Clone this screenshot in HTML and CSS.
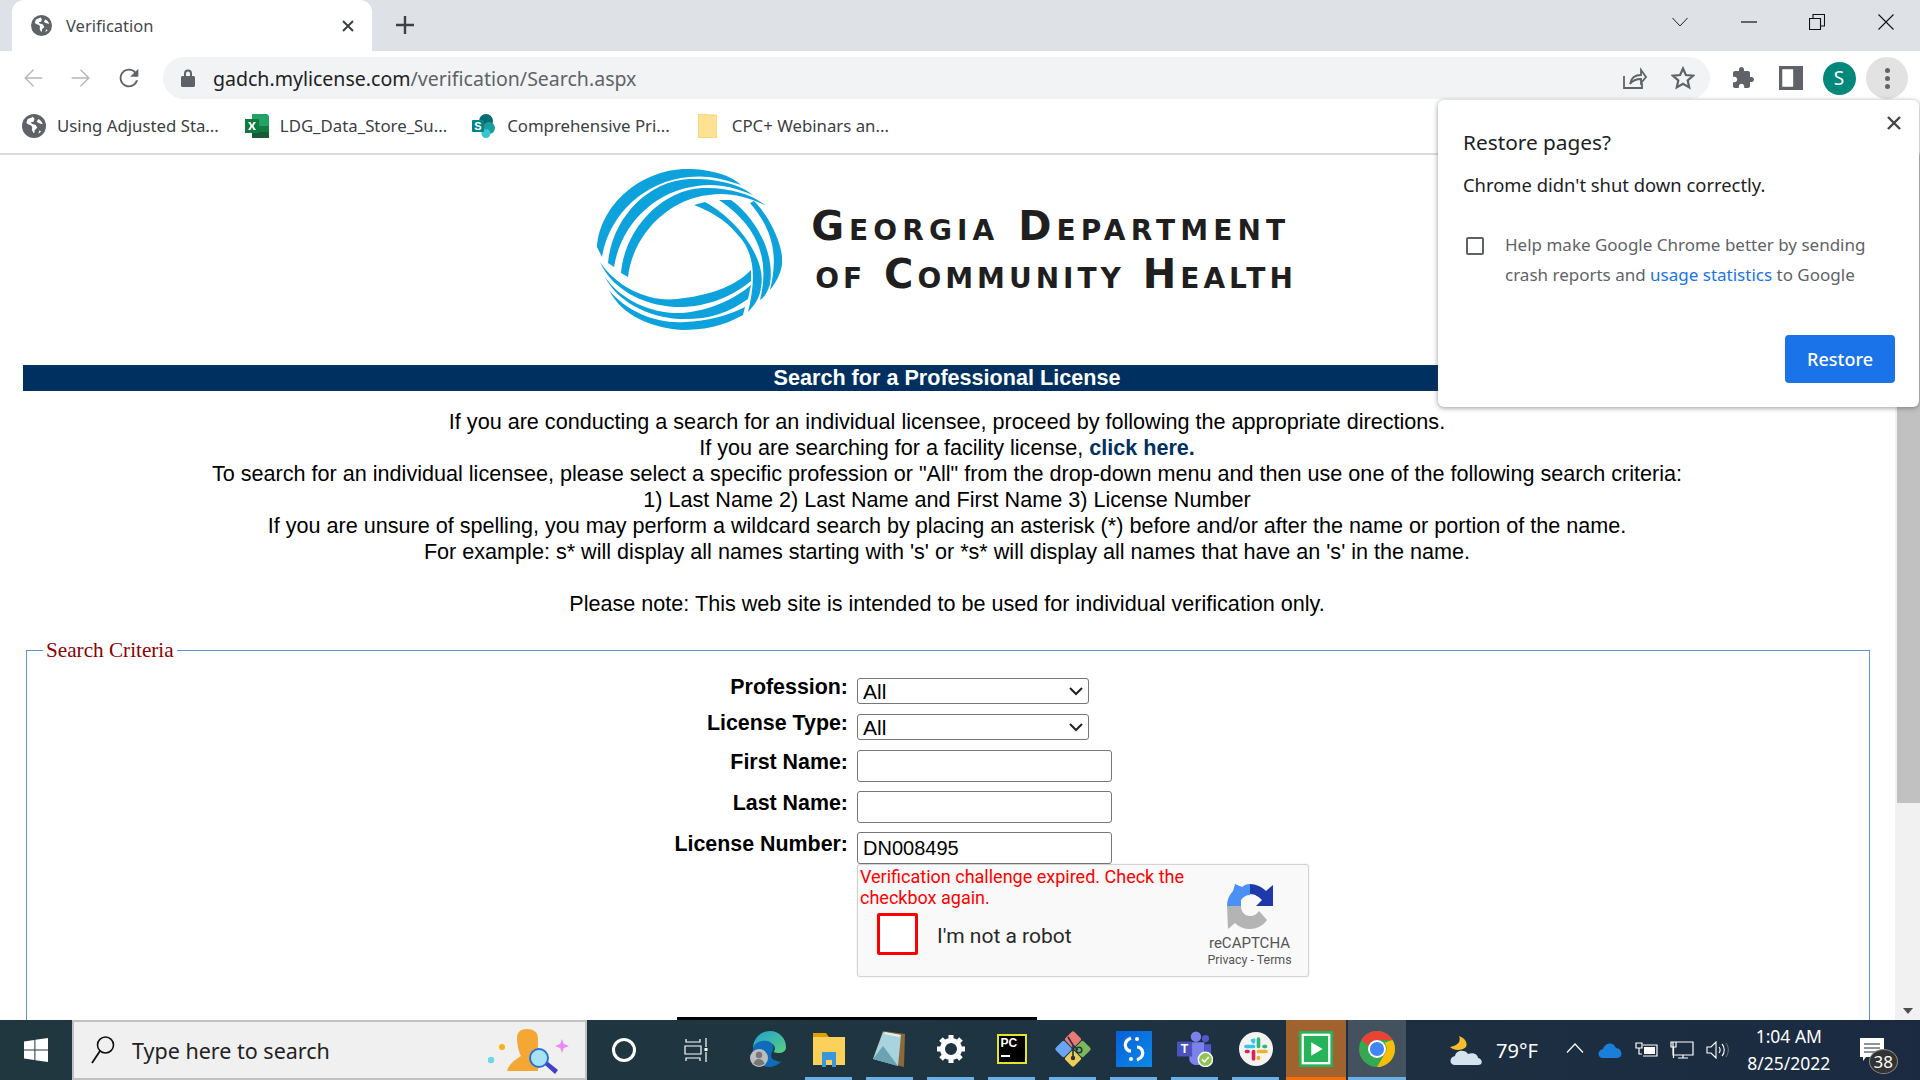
FILE: index.html
```html
<!DOCTYPE html>
<html lang="en">
<head>
    <meta charset="UTF-8">
    <meta name="viewport" content="width=device-width, initial-scale=1.0">
    <title>Verification</title>
    <link rel="stylesheet" href="styles.css">
</head>
<body>
    <svg class="defs" width="0" height="0">
        <symbol id="globe" viewBox="0 0 22 22">
            <circle cx="11" cy="11" r="11" fill="#5f6368"/>
            <path d="M10 2.5c-1 1-3.5 1-5 2.5l-1 3c1 1.5 3 2 4.5 2.5l1 2-.5 2 1.500 3 1-.5v-2l2.500-2.500-1.500-2.500-3.500-1-1-1.500 2.500-.5 1-2.500zM15 4.500l-1.500 2.500 2 1.500 3.500 1c-.5-2-2-4-4-5zM16 15l-1 3 2.500-2z" fill="#fff"/>
        </symbol>
        <symbol id="chevron" viewBox="0 0 14 9">
            <path d="M1 1l6 6 6-6" fill="none" stroke="#222" stroke-width="2"/>
        </symbol>
    </svg>

    <div class="browser">
        <!-- tabs -->
        <div class="tabstrip">
            <div class="tab">
                <svg class="favicon"><use href="#globe"/></svg>
                <span class="tab-title">Verification</span>
                <svg class="tab-close" viewBox="0 0 12 12"><path d="M1 1l10 10M11 1L1 11" stroke="#3c4043" stroke-width="2"/></svg>
            </div>
            <svg class="new-tab" viewBox="0 0 18 18"><path d="M9 0v18M0 9h18" stroke="#3c4043" stroke-width="2.4"/></svg>
            <div class="window-controls">
                <div class="win-btn"><svg width="16" height="10" viewBox="0 0 16 10"><path d="M.5 1L8 9l7.5-8" fill="none" stroke="#222" stroke-width="1"/></svg></div>
                <div class="win-btn"><svg width="16" height="2" viewBox="0 0 16 2"><path d="M0 1h16" stroke="#111" stroke-width="1.2"/></svg></div>
                <div class="win-btn"><svg width="16" height="16" viewBox="0 0 16 16"><path d="M.5 4.500h11v11H.5zM4 4.500V.5h11.500V12h-4" fill="none" stroke="#111" stroke-width="1.1"/></svg></div>
                <div class="win-btn"><svg width="16" height="16" viewBox="0 0 16 16"><path d="M.5.5l15 15M15.500.5l-15 15" stroke="#111" stroke-width="1.1"/></svg></div>
            </div>
        </div>

        <!-- address bar -->
        <div class="toolbar">
            <div class="tool-btn"><svg class="ic-nav" viewBox="0 0 24 24"><path fill="#b4b7bb" d="M20 11.300H6.800l6-6L12 4.400 4.400 12l7.600 7.600.8-.9-6-6H20z"/></svg></div>
            <div class="tool-btn"><svg class="ic-nav" viewBox="0 0 24 24"><path fill="#b4b7bb" d="M4 11.300h13.200l-6-6 .8-.9 7.600 7.600-7.600 7.600-.8-.9 6-6H4z"/></svg></div>
            <div class="tool-btn"><svg class="ic-nav" viewBox="0 0 24 24"><path fill="#5f6368" d="M17.650 6.350C16.200 4.900 14.210 4 12 4c-4.420 0-7.990 3.580-7.990 8s3.570 8 7.990 8c3.730 0 6.840-2.550 7.730-6h-1.800c-.82 2.500-3.200 4.400-5.930 4.400-3.500 0-6.400-2.900-6.400-6.400S8.500 5.600 12 5.600c1.760 0 3.340.74 4.500 1.900L13 11h7V4l-2.350 2.350z"/></svg></div>
            <div class="omnibox">
                <svg class="lock" viewBox="0 0 14 18"><path fill="#5f6368" d="M1.500 7H3V4.500a4 4 0 0 1 8 0V7h1.500c.8 0 1.500.7 1.500 1.500v8c0 .8-.7 1.500-1.500 1.500h-11C.7 18 0 17.300 0 16.500v-8C0 7.700.7 7 1.500 7zM5 7h4V4.500a2 2 0 0 0-4 0z"/></svg>
                <span class="url">gadch.mylicense.com<span class="url-path">/verification/Search.aspx</span></span>
                <svg class="omni-share" viewBox="0 0 24 22"><path d="M1 9v12h18v-5M7 17c1-6 5-9 11-9V3l5 7-5 6v-4c-5 0-8 1-11 5z" fill="none" stroke="#5f6368" stroke-width="1.8"/></svg>
                <svg class="omni-star" viewBox="0 0 24 24"><path d="M12 2.500l2.900 6.500 7.100.7-5.300 4.700 1.500 7L12 17.800l-6.200 3.600 1.500-7L2 9.700 9.100 9z" fill="none" stroke="#5f6368" stroke-width="2.2"/></svg>
            </div>
            <div class="tool-btn first-ext"><svg class="ic" viewBox="0 0 24 24"><path fill="#5f6368" d="M20.500 11H19V7c0-1.100-.9-2-2-2h-4V3.500C13 2.120 11.880 1 10.500 1S8 2.120 8 3.500V5H4c-1.100 0-1.990.9-1.990 2v3.800H3.500c1.490 0 2.700 1.210 2.700 2.700s-1.210 2.700-2.700 2.700H2V20c0 1.100.9 2 2 2h3.800v-1.500c0-1.490 1.210-2.700 2.700-2.700 1.490 0 2.700 1.210 2.700 2.700V22H17c1.100 0 2-.9 2-2v-4h1.500c1.380 0 2.500-1.120 2.500-2.500S21.880 11 20.500 11z"/></svg></div>
            <div class="tool-btn"><svg class="ic" viewBox="0 0 22 22"><path fill="#5f6368" d="M0 0h22v22H0zM3 3v16h10V3z" fill-rule="evenodd"/></svg></div>
            <div class="tool-btn"><div class="avatar">S</div></div>
            <div class="tool-btn"><div class="menu-btn"><i></i><i></i><i></i></div></div>
        </div>

        <!-- bookmarks -->
        <div class="bookmarks">
            <div class="bookmark bm-one">
                <svg class="bm-icon"><use href="#globe"/></svg>
                <span>Using Adjusted Sta...</span>
            </div>
            <div class="bookmark bm-two">
                <svg class="bm-icon" viewBox="0 0 24 24">
                    <path fill="#21a366" d="M7 0h15l2 2v20l-2 2H7z"/>
                    <path fill="#107c41" d="M7 12h17v12H7z"/>
                    <path fill="#185c37" d="M7 18h17v6H7z"/>
                    <rect y="5" width="14" height="14" fill="#0f7b3f"/>
                    <path d="M3 8h2.500L7 11l1.500-3H11l-2.600 4L11 16H8.500L7 13l-1.500 3H3l2.600-4z" fill="#fff"/>
                </svg>
                <span>LDG_Data_Store_Su...</span>
            </div>
            <div class="bookmark bm-three">
                <svg class="bm-icon" viewBox="0 0 24 24">
                    <circle cx="14" cy="7" r="7" fill="#036c70"/>
                    <circle cx="17" cy="14" r="6" fill="#1a9ba1"/>
                    <circle cx="14" cy="19.500" r="4.500" fill="#37c6d0"/>
                    <rect y="6" width="12" height="12" rx="1" fill="#038387"/>
                    <text x="6" y="15.500" class="sp-letter">S</text>
                </svg>
                <span>Comprehensive Pri...</span>
            </div>
            <div class="bookmark bm-four">
                <svg class="bm-folder" viewBox="0 0 19 24"><path d="M1 0h8l2 1h7l1 1v21l-1 1H1l-1-1V1z" fill="#fde293" stroke="#f2d26e"/></svg>
                <span>CPC+ Webinars an...</span>
            </div>
        </div>

        <div class="viewport">
            <div class="page">
                <div class="logo">
                    <svg class="logo-mark" viewBox="0 0 185 161">
                        <g fill="#0da2dc">
                            <path d="M0 78C3 35 45 0 90 0c22 0 44 6 54 16-19-7-36-10-52-8C48 12 12 45 5 88z"/>
                            <path d="M11 94c4-44 39-82 81-84 26-1 51 5 64 16-21-9-38-12-56-9-42 5-76 38-83 81z"/>
                            <path d="M24 104c3-39 36-82 81-85 25-1 50 6 63 17-20-9-38-13-56-10-40 4-76 39-81 82z"/>
                            <path d="M97 36l11-3c32 17 62 57 56 85-1 10-6 18-13 25 7-28 9-58-11-78-12-15-28-23-43-29z"/>
                            <path d="M122 31h12c26 19 44 54 39 84-2 7-5 13-10 16 9-36 2-71-41-100z"/>
                            <path d="M153 34l4-2c18 18 30 48 28 63-1 10-7 20-12 26 9-36 2-61-20-87z"/>
                            <path d="M3 93c17 25 47 40 77 37 30-3 58-12 74-29v11c-19 16-46 27-76 26-33-2-63-18-75-45z"/>
                            <path d="M8 108c17 24 47 37 77 36 27-2 53-14 69-28l-3 14c-21 15-41 21-69 20-32-2-62-18-74-42z"/>
                            <path d="M12 121c18 22 48 34 76 32 22-1 42-6 60-15l-2 8c-21 12-41 15-61 15-30-2-60-14-73-40z"/>
                        </g>
                    </svg>
                    <div class="logo-text">
                        <div class="logo-line">Georgia Department</div>
                        <div class="logo-line logo-line-two">of Community Health</div>
                    </div>
                </div>

                <div class="banner">Search for a Professional License</div>

                <div class="intro">
                    <div>If you are conducting a search for an individual licensee, proceed by following the appropriate directions.</div>
                    <div>If you are searching for a facility license, <a class="facility-link">click here.</a></div>
                    <div>To search for an individual licensee, please select a specific profession or "All" from the drop-down menu and then use one of the following search criteria:</div>
                    <div>1) Last Name 2) Last Name and First Name 3) License Number</div>
                    <div>If you are unsure of spelling, you may perform a wildcard search by placing an asterisk (*) before and/or after the name or portion of the name.</div>
                    <div>For example: s* will display all names starting with 's' or *s* will display all names that have an 's' in the name.</div>
                    <div class="intro-note">Please note: This web site is intended to be used for individual verification only.</div>
                </div>

                <fieldset class="criteria">
                    <legend>Search Criteria</legend>
                    <div class="form-grid">
                        <label class="field-label">Profession:</label>
                        <div class="select-wrap">
                            <select class="field-select"><option>All</option></select>
                            <svg class="select-arrow"><use href="#chevron"/></svg>
                        </div>
                        <label class="field-label">License Type:</label>
                        <div class="select-wrap">
                            <select class="field-select"><option>All</option></select>
                            <svg class="select-arrow"><use href="#chevron"/></svg>
                        </div>
                        <label class="field-label tall">First Name:</label>
                        <input class="field-input" type="text">
                        <label class="field-label tall">Last Name:</label>
                        <input class="field-input" type="text">
                        <label class="field-label tall">License Number:</label>
                        <input class="field-input" type="text" value="DN008495">
                        <div class="captcha">
                            <div class="captcha-main">
                                <div class="captcha-error">Verification challenge expired. Check the checkbox again.</div>
                                <div class="captcha-check">
                                    <div class="captcha-box"></div>
                                    <span class="captcha-label">I'm not a robot</span>
                                </div>
                            </div>
                            <div class="captcha-brand">
                                <svg class="captcha-logo" viewBox="0 0 46 46">
                                    <path d="M0 23C0 17 2 12 6 8L8 1L15 4C17 2 20 1 23 1V12C19 12 16 14 14 17V23Z" fill="#4a90f5"/>
                                    <path d="M23 1C29 1 35 4 39 8L46 2V23H29L35 17C32 14 28 11 23 11Z" fill="#1c3aa9"/>
                                    <path d="M0 23H14C14 29 18 33 23 33C27 33 30 31 32 28L40 37C36 43 29 46 23 46C17 46 12 44 8 40L1 46Z" fill="#b4b4b4"/>
                                </svg>
                                <div class="captcha-name">reCAPTCHA</div>
                                <div class="captcha-links">Privacy - Terms</div>
                            </div>
                        </div>
                    </div>
                    <div class="form-rule"></div>
                </fieldset>
            </div>

            <div class="scrollbar">
                <div class="scroll-thumb"></div>
                <div class="scroll-down"></div>
            </div>
        </div>

        <!-- restore bubble sits over the page -->
        <div class="restore">
            <svg class="restore-close" viewBox="0 0 14 14"><path d="M1 1l12 12M13 1L1 13" stroke="#444" stroke-width="2.4"/></svg>
            <div class="restore-title">Restore pages?</div>
            <div class="restore-msg">Chrome didn't shut down correctly.</div>
            <div class="restore-row">
                <div class="restore-check"></div>
                <div class="restore-help">
                    <div>Help make Google Chrome better by sending</div>
                    <div>crash reports and <a class="restore-link">usage statistics</a> to Google</div>
                </div>
            </div>
            <div class="restore-actions"><button class="restore-btn">Restore</button></div>
        </div>

        <!-- windows taskbar -->
        <div class="taskbar">
            <div class="start">
                <svg width="24" height="24" viewBox="0 0 24 24"><path fill="#fff" d="M0 3.400L10.400 2v9.500H0zM11.400 1.800L24 0v11.500H11.400zM0 12.500h10.400V22L0 20.600zM11.400 12.500H24V24l-12.600-1.800z"/></svg>
            </div>
            <div class="search">
                <svg class="search-icon" viewBox="0 0 24 30"><circle cx="14.500" cy="10" r="8" fill="none" stroke="#111" stroke-width="1.6"/><path d="M9 16L1 28" stroke="#111" stroke-width="1.8"/></svg>
                <span class="search-text">Type here to search</span>
                <svg class="search-art" viewBox="0 0 82 50">
                    <circle cx="3" cy="32" r="3.300" fill="#70d6e8"/>
                    <circle cx="14" cy="19" r="3" fill="#fbb011"/>
                    <path d="M19 43c2-8 11-13 14-15-3-6-4-14-4-18 0-6 4-9 10-9s11 3 11 9v33z" fill="#f5a733"/>
                    <circle cx="51" cy="30" r="9" fill="#a6e4f4" stroke="#2b6fdc" stroke-width="2"/>
                    <path d="M57 37l3-3 10 8-3 4z" fill="#4040c8"/>
                    <path d="M74 11l1.800 5 5.200 2-5.200 2-1.800 5-1.800-5-5.200-2 5.200-2z" fill="#e68af5"/>
                </svg>
            </div>
            <div class="sys-slot cortana"><div class="cortana-ring"></div></div>
            <div class="sys-slot taskview">
                <svg width="24" height="24" viewBox="0 0 24 24"><path d="M2 1v3h14V1M2 23v-3h14v3M1 8h16v8H1zM22 0v9M22 14v10" fill="none" stroke="#fff" stroke-width="1.2"/><rect x="20.500" y="10" width="3" height="3" fill="#fff"/></svg>
            </div>

            <div class="apps">
                <div class="app">
                    <svg class="app-icon" viewBox="0 0 36 36">
                        <defs>
                            <linearGradient id="edge-top" x1="0" y1="0" x2="1" y2="1"><stop offset="0" stop-color="#1ea0d8"/><stop offset="1" stop-color="#5bd07a"/></linearGradient>
                        </defs>
                        <path d="M3 18C3 7 11 0 20 0c9 0 16 7 16 16 0 4-3 6-8 6-3 0-5-1-4-2 2-2 1-8-6-8-6 0-13 0-15 6z" fill="url(#edge-top)"/>
                        <path d="M3 18c1-7 9-9 14-8 6 1 8 6 5 11-2 4-1 8 5 9 2 1 3 1 5 0-4 4-9 6-13 6C10 36 2 28 3 18z" fill="#0f6cbd"/>
                        <circle cx="9" cy="27" r="9" fill="#bdbdbd"/>
                        <circle cx="9" cy="24" r="3.200" fill="#777"/>
                        <path d="M3.500 33c1-4 3.500-5 5.500-5s4.500 1 5.500 5l-5.500 2z" fill="#777"/>
                    </svg>
                </div>
                <div class="app">
                    <svg class="app-icon folder" viewBox="0 0 32 36">
                        <path d="M0 2h13l3 4H0z" fill="#e0a100"/>
                        <path d="M0 6h32v28H0z" fill="#fbd15b"/>
                        <path d="M9 21h14v15h-4v-7h-6v7H9z" fill="#3a96dd"/>
                    </svg>
                </div>
                <div class="app">
                    <svg class="app-icon notepad" viewBox="0 0 33 36">
                        <path d="M10 0l22 3-1 33L0 28z" fill="#8a6a3a"/>
                        <path d="M10 1l18 3-3 31L0 28z" fill="#a8d3df"/>
                        <path d="M12 1l16 3-2 2-15-3z" fill="#e6eef0"/>
                        <path d="M0 28l10-13 15 20z" fill="#4f8ea1" opacity=".7"/>
                    </svg>
                </div>
                <div class="app">
                    <svg class="app-icon gear" viewBox="0 0 28 28">
                        <circle cx="14" cy="14" r="8.500" fill="none" stroke="#fff" stroke-width="5"/>
                        <path d="M14 0v5M14 23v5M0 14h5M23 14h5M4 4l4 4M20 20l4 4M24 4l-4 4M8 20l-4 4" stroke="#fff" stroke-width="5"/>
                    </svg>
                </div>
                <div class="app">
                    <div class="pc-icon"><span>PC</span><i></i></div>
                </div>
                <div class="app">
                    <svg class="app-icon" viewBox="0 0 36 36">
                        <g transform="rotate(45 18 18)">
                            <rect x="5" y="5" width="12.500" height="12.500" rx="2" fill="#e97b76"/>
                            <rect x="18.500" y="5" width="12.500" height="12.500" rx="2" fill="#7cb95a"/>
                            <rect x="18.500" y="18.500" width="12.500" height="12.500" rx="2" fill="#f0cd55"/>
                            <rect x="5" y="18.500" width="12.500" height="12.500" rx="2" fill="#6aa5f5"/>
                        </g>
                        <path d="M13 6l5 8v13M18 14l5 5" fill="none" stroke="#263540" stroke-width="1.6"/>
                        <circle cx="18" cy="27" r="2.200" fill="#263540"/>
                        <circle cx="24" cy="19" r="2.800" fill="none" stroke="#263540" stroke-width="1.6"/>
                    </svg>
                </div>
                <div class="app">
                    <div class="s-icon">
                        <svg width="36" height="36" viewBox="0 0 36 36"><path d="M15 7c-5 2-7 6-5 10 1 2 3 3 5 3M21 29c5-2 7-6 5-10-1-2-3-3-5-3" fill="none" stroke="#fff" stroke-width="3.2"/><circle cx="21" cy="8" r="2" fill="#fff"/><circle cx="15" cy="28" r="2" fill="#fff"/></svg>
                    </div>
                </div>
                <div class="app">
                    <svg class="app-icon" viewBox="0 0 38 38">
                        <circle cx="20" cy="6" r="5.500" fill="#7b83eb"/>
                        <circle cx="30" cy="8" r="3.800" fill="#5059c9"/>
                        <path d="M13 12h16v18c0 4-4 6-8 6s-8-3-8-6z" fill="#7b83eb"/>
                        <path d="M29 14h7v12c0 2-3 4-7 4z" fill="#5059c9"/>
                        <rect y="11" width="16" height="16" rx="1" fill="#4b53bc"/>
                        <text x="8" y="23.500" class="teams-letter">T</text>
                        <circle cx="30" cy="30" r="7.500" fill="#92c353" stroke="#fff" stroke-width="1.5"/>
                        <path d="M26.500 30l2.500 2.500 4.500-5" fill="none" stroke="#fff" stroke-width="1.8"/>
                    </svg>
                </div>
                <div class="app">
                    <svg class="app-icon" viewBox="0 0 36 36">
                        <circle cx="18" cy="18" r="17" fill="#f4f3f0"/>
                        <g fill="none" stroke-width="3.6" stroke-linecap="round">
                            <path d="M8 15.500h7.500" stroke="#36c5f0"/>
                            <path d="M14.500 9.500h1v1.500" stroke="#36c5f0"/>
                            <path d="M20.500 8v7.500" stroke="#2eb67d"/>
                            <path d="M26 15.500h1.500" stroke="#2eb67d"/>
                            <path d="M20.500 20.500H28" stroke="#ecb22e"/>
                            <path d="M20.500 26.500v1" stroke="#ecb22e"/>
                            <path d="M15.500 20.500V28" stroke="#e01e5a"/>
                            <path d="M8.500 20.500H10" stroke="#e01e5a"/>
                        </g>
                    </svg>
                </div>
                <div class="app app-active">
                    <svg class="app-icon" viewBox="0 0 36 38">
                        <rect width="36" height="38" fill="#27b35a"/>
                        <rect x="4" y="4" width="28" height="30" fill="none" stroke="#fff" stroke-width="2.4"/>
                        <path d="M13 12l12 7-12 7z" fill="#fff"/>
                    </svg>
                </div>
                <div class="app app-chrome">
                    <svg class="app-icon" viewBox="0 0 34 34">
                        <circle cx="17" cy="17" r="17" fill="#34a853"/>
                        <path d="M2.300 8.500A17 17 0 0 1 31.700 8.500H17a8.500 8.500 0 0 0-8 5.600z" fill="#ea4335"/>
                        <path d="M31.700 8.500A17 17 0 0 1 17 34l7.500-12.700A8.500 8.500 0 0 0 24 11z" fill="#fbbc04"/>
                        <circle cx="17" cy="17" r="8.500" fill="#fff"/>
                        <circle cx="17" cy="17" r="6.700" fill="#4285f4"/>
                    </svg>
                </div>
            </div>

            <div class="tray">
                <svg class="tray-weather" viewBox="0 0 33 29">
                    <path d="M9 0c2 5 0 9-9 11 4 4 12 4 16 0 2-4-1-9-7-11z" fill="#f8bd2c"/>
                    <path d="M5 29c-6 0-6-8 0-9 1-6 10-7 13-2 6-2 10 1 10 4 5 1 5 7 0 7z" fill="#d5e3ef"/>
                </svg>
                <span class="tray-temp">79°F</span>
                <svg class="tray-chevron" viewBox="0 0 18 10"><path d="M1 9.500L9 1l8 8.500" fill="none" stroke="#fff" stroke-width="1.2"/></svg>
                <svg class="tray-cloud" viewBox="0 0 24 16"><path d="M5 16c-6 0-6-8 0-9 2-6 10-8 13-1 6 0 8 10 1 10z" fill="#1a7fd8"/></svg>
                <svg class="tray-power" viewBox="0 0 24 18">
                    <path d="M2 2v5h6V2zM5 7v6h3" fill="none" stroke="#fff" stroke-width="1.2"/>
                    <path d="M9 4h14v11H9" fill="none" stroke="#fff" stroke-width="1.2"/>
                    <rect x="10" y="6" width="11" height="7" fill="#fff"/>
                </svg>
                <svg class="tray-net" viewBox="0 0 24 18"><path d="M3 1h20v13H3zM1 1h5v5H1zM3.500 6v11M13 14v3M8 17h10" fill="none" stroke="#fff" stroke-width="1.2"/></svg>
                <svg class="tray-vol" viewBox="0 0 23 18"><path d="M1 6h4l5-5v16l-5-5H1zM13 6c1.500 2 1.500 4 0 6M16 3c3 3 3 9 0 12" fill="none" stroke="#fff" stroke-width="1.1"/><path d="M20 2c3 4 3 10 0 14" fill="none" stroke="#777" stroke-width="1"/></svg>
                <div class="tray-clock">
                    <div>1:04 AM</div>
                    <div>8/25/2022</div>
                </div>
                <div class="tray-notify">
                    <svg width="24" height="24" viewBox="0 0 24 24"><path d="M0 0h24v19H6l-3 4v-4H0z" fill="#fff"/><path d="M4 6h16M4 10h16M4 14h16" stroke="#1b2a41" stroke-width="1"/></svg>
                    <span class="notify-badge">38</span>
                </div>
            </div>
        </div>
    </div>
</body>
</html>
```

FILE: styles.css
```css
html, body {
    margin: 0;
    padding: 0;
    overflow: hidden;
}
body {
    width: 1920px;
    height: 1080px;
    font-family: "Liberation Sans", Arial, sans-serif;
    background: #fff;
}
.defs { position: absolute; }
svg { display: block; flex-shrink: 0; }

.browser {
    position: relative;
    display: flex;
    flex-direction: column;
    height: 1080px;
}

/* tab strip */
.tabstrip {
    display: flex;
    align-items: flex-end;
    height: 51px;
    background: #dee1e6;
}
.tab {
    display: flex;
    align-items: center;
    width: 360px;
    height: 51px;
    margin-left: 12px;
    background: #fff;
    border-radius: 12px 12px 0 0;
    box-sizing: border-box;
    padding-left: 19px;
}
.favicon { width: 21px; height: 21px; }
.tab-title {
    margin-left: 14px;
    font: 16.5px "Noto Sans", sans-serif;
    color: #45494e;
}
.tab-close { width: 12px; height: 12px; margin-left: auto; margin-right: 18px; }
.new-tab { width: 18px; height: 18px; margin: 0 0 17px 24px; }
.window-controls { display: flex; margin-left: auto; align-self: flex-start; }
.win-btn {
    display: flex;
    align-items: center;
    justify-content: center;
    width: 68.5px;
    height: 43px;
}

/* toolbar */
.toolbar {
    display: flex;
    align-items: flex-start;
    height: 42px;
    padding: 6px 0 0 9px;
}
.tool-btn {
    display: flex;
    align-items: center;
    justify-content: center;
    width: 48px;
    height: 42px;
}
.ic { width: 24px; height: 24px; }
.ic-nav { width: 28px; height: 28px; }
.omnibox {
    display: flex;
    align-items: center;
    width: 1547px;
    height: 42px;
    margin-left: 10px;
    background: #f1f3f4;
    border-radius: 21px;
}
.lock { width: 14px; height: 18px; margin-left: 18px; }
.url {
    margin-left: 18px;
    font: 19.55px "Noto Sans", sans-serif;
    color: #202124;
}
.url-path { color: #5f6368; }
.omni-share { width: 24px; height: 22px; margin-left: auto; }
.omni-star { width: 24px; height: 24px; margin: 0 15px 0 24px; }
.first-ext { margin-left: 9px; }
.avatar {
    width: 33px;
    height: 33px;
    border-radius: 50%;
    background: #00897b;
    color: #fff;
    font: 19px/33px "Noto Sans", sans-serif;
    text-align: center;
}
.menu-btn {
    display: flex;
    flex-direction: column;
    align-items: center;
    justify-content: center;
    gap: 3px;
    width: 42px;
    height: 42px;
    border-radius: 50%;
    background: #e2e2e2;
}
.menu-btn i {
    width: 5px;
    height: 5px;
    border-radius: 50%;
    background: #5f6368;
}

/* bookmarks */
.bookmarks {
    display: flex;
    align-items: center;
    height: 54px;
    border-bottom: 2px solid #dadce0;
    font: 16.8px "Noto Sans", sans-serif;
    color: #3c4043;
}
.bookmark { display: flex; align-items: center; }
.bookmark span { margin-top: -2px; }
.bm-icon { width: 24px; height: 24px; margin-right: 11px; }
.bm-folder { width: 19px; height: 24px; margin-right: 15px; }
.bm-one { margin-left: 22px; }
.bm-two { margin-left: 26px; }
.bm-three { margin-left: 25px; }
.bm-four { margin-left: 28px; }
.sp-letter { font: bold 11px "Liberation Sans", sans-serif; fill: #fff; text-anchor: middle; }

/* page */
.viewport {
    display: flex;
    height: 865px;
    overflow: hidden;
}
.page {
    flex: 1;
    padding: 14px 24px 0 23px;
    min-width: 0;
}
.logo {
    display: flex;
    justify-content: center;
    align-items: flex-start;
}
.logo-mark { width: 185px; height: 161px; }
.logo-text {
    margin: 33px 0 0 29px;
    font: bold 40px/48px "DejaVu Sans", sans-serif;
    font-variant: small-caps;
    color: #1f1f1f;
    white-space: nowrap;
}
.logo-line { letter-spacing: 5.1px; }
.logo-line-two { margin-left: 4px; letter-spacing: 4px; }
.banner {
    margin-top: 35px;
    height: 26px;
    background: #00305f;
    color: #fff;
    font: bold 21.6px/26px "Liberation Sans", sans-serif;
    text-align: center;
}
.intro {
    margin-top: 18px;
    font-size: 21.6px;
    line-height: 26px;
    text-align: center;
    color: #000;
}
.intro-note { margin-top: 26px; }
.facility-link { color: #00305f; font-weight: bold; }

.criteria {
    margin: 21px 1px 0 3px;
    padding: 0;
    border: 1px solid #5b92d8;
    min-width: 0;
}
.criteria legend {
    margin-left: 16px;
    padding: 0 3px;
    font: 21.2px "Liberation Serif", serif;
    color: #8b0000;
}
.form-grid {
    display: grid;
    grid-template-columns: 821px auto;
    column-gap: 9px;
    row-gap: 9px;
    justify-content: start;
    justify-items: start;
    margin-top: 15px;
}
.field-label {
    justify-self: end;
    font-weight: bold;
    font-size: 21.4px;
    line-height: 18px;
}
.field-label.tall { line-height: 24px; }
.select-wrap { position: relative; margin-bottom: 1px; }
.field-select {
    display: block;
    width: 232px;
    height: 26px;
    padding: 0 0 0 5px;
    appearance: none;
    font: 21px "Liberation Sans", sans-serif;
    color: #000;
    background: #fff;
    border: 1px solid #767676;
    border-radius: 3px;
}
.select-arrow {
    position: absolute;
    top: 9px;
    right: 6px;
    width: 14px;
    height: 9px;
}
.field-input {
    box-sizing: border-box;
    display: block;
    width: 255px;
    height: 32px;
    padding: 1px 5px;
    font: 20px "Liberation Sans", sans-serif;
    border: 1px solid #767676;
    border-radius: 3px;
    outline: none;
}

/* recaptcha */
.captcha {
    grid-column: 2;
    display: flex;
    box-sizing: border-box;
    width: 452px;
    height: 113px;
    margin-top: -9px;
    background: #f9f9f9;
    border: 1px solid #d3d3d3;
    border-radius: 3px;
    box-shadow: 0 0 2px rgba(0, 0, 0, 0.12);
}
.captcha-main { width: 333px; }
.captcha-error {
    padding: 1px 0 0 2px;
    font: 18px/21px Roboto, sans-serif;
    color: #ff0000;
}
.captcha-check {
    display: flex;
    align-items: center;
    gap: 19px;
    margin: 5px 0 0 19px;
    font: 21px Roboto, sans-serif;
    color: #282828;
}
.captcha-label { margin-top: 3px; }
.captcha-box {
    box-sizing: border-box;
    width: 41px;
    height: 42px;
    background: #fff;
    border: 3px solid #ff0000;
    border-radius: 2px;
}
.captcha-brand {
    flex: 1;
    display: flex;
    flex-direction: column;
    align-items: center;
    padding-top: 18px;
    color: #555;
}
.captcha-logo { width: 46px; height: 46px; }
.captcha-name { margin-top: 5px; font: 15px/18px Roboto, sans-serif; }
.captcha-links { font: 12.4px/16px Roboto, sans-serif; }
.form-rule {
    width: 360px;
    height: 3px;
    margin: 40px 0 0 650px;
    background: #000;
}

/* scrollbar */
.scrollbar {
    position: relative;
    width: 25px;
    background: #f1f1f1;
}
.scroll-thumb {
    width: 23px;
    height: 648px;
    margin-left: 2px;
    background: #c1c1c1;
}
.scroll-down {
    position: absolute;
    left: 8px;
    bottom: 6px;
    border-left: 5px solid transparent;
    border-right: 5px solid transparent;
    border-top: 6px solid #505050;
}

/* restore bubble */
.restore {
    position: absolute;
    top: 100px;
    left: 1438px;
    box-sizing: border-box;
    width: 481px;
    height: 307px;
    padding: 25px 24px 0 25px;
    background: #fff;
    border-radius: 6px;
    box-shadow: 0 1px 5px rgba(60, 64, 67, 0.55);
    font-family: "Noto Sans", sans-serif;
}
.restore-close {
    position: absolute;
    top: 16px;
    right: 18px;
    width: 14px;
    height: 14px;
}
.restore-title { font-size: 20.8px; line-height: 34px; color: #202124; }
.restore-msg { margin-top: 9px; font-size: 18.4px; line-height: 34px; color: #202124; }
.restore-row { display: flex; margin-top: 28px; }
.restore-check {
    box-sizing: border-box;
    width: 18px;
    height: 18px;
    margin: 7px 0 0 3px;
    border: 2px solid #5f6368;
    border-radius: 2px;
}
.restore-help {
    width: 380px;
    margin-left: 21px;
    font-size: 17px;
    line-height: 30px;
    color: #5f6368;
}
.restore-link { color: #1a73e8; }
.restore-actions { display: flex; justify-content: flex-end; margin-top: 45px; }
.restore-btn {
    width: 110px;
    height: 48px;
    padding: 0;
    background: #1a73e8;
    color: #fff;
    border: none;
    border-radius: 4px;
    font: 500 18px "Noto Sans", sans-serif;
}

/* taskbar */
.taskbar {
    display: flex;
    align-items: stretch;
    height: 60px;
    background: linear-gradient(90deg, #20373f 0%, #1f3641 40%, #1b2a41 100%);
}
.start {
    display: flex;
    align-items: center;
    justify-content: center;
    width: 72px;
}
.search {
    display: flex;
    align-items: center;
    box-sizing: border-box;
    width: 515px;
    background: #f0f0f0;
    border: 2px solid #c2c2c2;
}
.search-icon { width: 24px; height: 30px; margin-left: 17px; }
.search-text {
    margin: 1px 0 0 17px;
    font: 21.5px "Noto Sans", sans-serif;
    color: #222;
}
.search-art { width: 82px; height: 50px; margin-left: auto; margin-right: 15px; align-self: flex-end; }
.sys-slot {
    display: flex;
    align-items: center;
    justify-content: center;
    width: 74px;
}
.taskview { width: 70px; margin-right: 6px; }
.cortana-ring {
    box-sizing: border-box;
    width: 24px;
    height: 24px;
    border: 3px solid #fff;
    border-radius: 50%;
}

.apps { display: flex; }
.app {
    position: relative;
    display: flex;
    align-items: center;
    justify-content: center;
    width: 61px;
    padding-bottom: 2px;
    box-sizing: border-box;
}
.app::after {
    content: "";
    position: absolute;
    left: 7px;
    right: 7px;
    bottom: 0;
    height: 3px;
    background: #6ab0e8;
}
.app:first-child::after { display: none; }
.app-active { background: #a0622f; margin: 0 1px 0 0; width: 60px; }
.app-active::after { left: 0; right: 0; background: #f76d00; }
.app-chrome { background: #44525f; width: 58px; margin-left: 1px; }
.app-chrome::after { left: 0; right: 0; }
.app-icon { width: 36px; height: 36px; }
.folder { width: 32px; }
.notepad { width: 33px; }
.gear { width: 28px; height: 28px; }
.pc-icon {
    box-sizing: border-box;
    width: 30px;
    height: 30px;
    padding: 1px 2px;
    background: #000;
    border: 2px solid #e3e32a;
    color: #fff;
    font: bold 12px/13px "Liberation Sans", sans-serif;
}
.pc-icon span { display: block; }
.pc-icon i { display: block; width: 9px; height: 2px; margin-top: 5px; background: #fff; }
.teams-letter { font: bold 13px "Liberation Sans", sans-serif; fill: #fff; text-anchor: middle; }
.s-icon {
    width: 36px;
    height: 36px;
    background: linear-gradient(135deg, #0a5fd8, #0a8ae8);
}

.tray {
    display: flex;
    align-items: center;
    flex: 1;
    color: #fff;
}
.tray-weather { width: 33px; height: 29px; margin-left: 44px; }
.tray-temp { margin: 1px 0 0 13px; font: 20px "Noto Sans", sans-serif; }
.tray-chevron { width: 18px; height: 10px; margin-left: 28px; margin-bottom: 5px; }
.tray-cloud { width: 24px; height: 16px; margin-left: 14px; }
.tray-power { width: 24px; height: 18px; margin-left: 12px; }
.tray-net { width: 24px; height: 18px; margin-left: 12px; }
.tray-vol { width: 23px; height: 18px; margin-left: 12px; }
.tray-clock {
    width: 90px;
    margin-left: 15px;
    text-align: center;
    font: 17.5px/27px "Noto Sans", sans-serif;
}
.tray-notify { position: relative; margin-left: 26px; align-self: flex-start; margin-top: 18px; }
.notify-badge {
    position: absolute;
    top: 11px;
    left: 9px;
    box-sizing: border-box;
    width: 29px;
    height: 25px;
    border: 1px solid #888;
    border-radius: 50%;
    background: #333;
    color: #fff;
    font: 17px/23px "Noto Sans", sans-serif;
    text-align: center;
}
```
